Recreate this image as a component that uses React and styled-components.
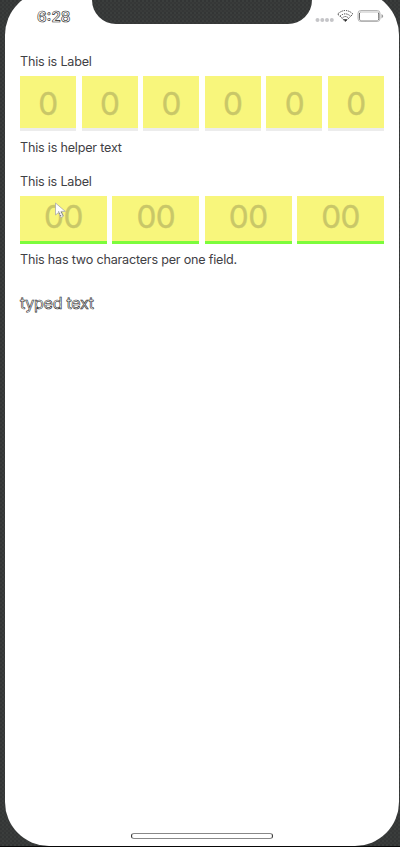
import React from "react";
import styled, { createGlobalStyle } from "styled-components";

const GlobalStyle = createGlobalStyle`
  * { box-sizing: border-box; }
  body { margin: 0; background: #353737; overflow: hidden; }
`;

const Device = styled.div`
  position: relative;
  height: 847px;
  padding: 0 1px 1px 5px;
  overflow: hidden;
  border-bottom: 1px solid #080808;
  background: conic-gradient(#3b3e3d 25%, #353737 0 50%, #393b3a 0 75%, #333535 0) 0 0 / 4px 4px;
  font-family: Inter, "Liberation Sans", sans-serif;
`;

const Screen = styled.main`
  height: 855px;
  margin-top: -9px;
  padding: 9px 15px 0;
  border-radius: 44px;
  background: #fff;
`;

const Notch = styled.div`
  position: absolute;
  top: 0;
  left: 92px;
  width: 220px;
  height: 24px;
  border-radius: 0 0 24px 24px;
  background: conic-gradient(#3b3e3d 25%, #353737 0 50%, #393b3a 0 75%, #333535 0) 0 0 / 4px 4px;
`;

const StatusBar = styled.header`
  display: flex;
  justify-content: space-between;
  align-items: center;
  height: 33px;
  padding-left: 17px;
`;

const Time = styled.time`
  font-size: 15px;
  font-weight: 600;
  line-height: 18px;
  color: #fff;
  -webkit-text-stroke: 0.6px #222;
`;

const StatusIcons = styled.svg`
  width: 70px;
  height: 18px;
  margin-right: -1px;
`;

const Field = styled.section`
  display: flex;
  flex-direction: column;
  padding-top: ${({ $top }) => $top}px;
`;

const Label = styled.label`
  height: 16px;
  font-size: 12.6px;
  line-height: 18px;
  letter-spacing: -0.21px;
  color: #3f4145;
`;

const Cells = styled.div`
  display: grid;
  grid-template-columns: repeat(${({ $count }) => $count}, 1fr);
  gap: 5.6px;
  margin-top: 7px;
`;

const Cell = styled.div`
  height: ${({ $height }) => $height}px;
  border-bottom: 3px solid ${({ $line }) => $line};
  background: #f8f67c;
  color: #c9c768;
  font-size: 31.5px;
  line-height: ${({ $leading }) => $leading}px;
  letter-spacing: -0.5px;
  text-align: center;
  -webkit-text-stroke: 0.35px #c9c768;
`;

const Helper = styled.p`
  height: 16px;
  margin: ${({ $gap }) => $gap}px 0 0;
  color: #3f4145;
  font-size: 12.6px;
  line-height: 16px;
  letter-spacing: -0.2px;
`;

const TypedText = styled.p`
  margin: 25px 0 0;
  font-size: 16px;
  line-height: 20px;
  letter-spacing: -0.25px;
  color: #fff;
  -webkit-text-stroke: 0.6px #222;
`;

const Pointer = styled.svg`
  position: absolute;
  left: 54px;
  top: 202px;
  width: 12px;
  height: 18px;
`;

const HomeIndicator = styled.div`
  position: absolute;
  left: 131px;
  top: 833px;
  width: 142px;
  height: 6px;
  border: 1px solid #888;
  border-left-color: #333;
  border-right-color: #333;
  border-radius: 3px;
`;

function CodeField({ label, helper, count, placeholder, height, leading, line, top, gap }) {
  return (
    <Field $top={top}>
      <Label>{label}</Label>
      <Cells $count={count}>
        {Array.from({ length: count }, (_, i) => (
          <Cell key={i} $height={height} $leading={leading} $line={line}>{placeholder}</Cell>
        ))}
      </Cells>
      <Helper $gap={gap}>{helper}</Helper>
    </Field>
  );
}

export default function App() {
  return (
    <Device>
      <GlobalStyle />
      <Screen>
        <StatusBar>
          <Time>6:28</Time>
          <StatusIcons viewBox="0 0 70 18" fill="none">
            <g fill="#c5c5c8">
              <circle cx="2.5" cy="12" r="2" />
              <circle cx="7.3" cy="12" r="2" />
              <circle cx="12" cy="12" r="2" />
              <circle cx="16.8" cy="12" r="2" />
            </g>
            <g stroke="#222" strokeWidth=".9" strokeDasharray="1.3 1">
              <path d="M22.7 6Q30.3 -1 38 6L30.3 13.5Z" />
              <path d="M25 8.2Q30.3 3.5 35.6 8.2M27.5 10Q30.3 7 33.3 10" />
            </g>
            <path d="m28.4 11.3 2 2.3 2-2.3" fill="#222" />
            <rect x="43" y="2.5" width="22" height="11" rx="2.8" stroke="#b5b5b5" />
            <path d="M45 4h18M45 12.5h18" stroke="#999" strokeWidth=".6" />
            <path d="M45.2 4.5q-.8.3-.8 1.5v4.5q0 1.2.8 1.5M63 4.5q.8.3.8 1.5v4.5q0 1.2-.8 1.5" stroke="#333" strokeWidth=".8" />
            <path d="M66.5 6q3.4 2.2 0 4.4z" fill="#999" />
          </StatusIcons>
        </StatusBar>
        <CodeField
          label="This is Label" helper="This is helper text"
          count={6} placeholder="0" height={55} leading={56}
          line="#ececec" top={20} gap={9}
        />
        <CodeField
          label="This is Label" helper="This has two characters per one field."
          count={4} placeholder="00" height={48} leading={41}
          line="#7cfc3c" top={17} gap={8}
        />
        <TypedText>typed text</TypedText>
      </Screen>
      <Notch />
      <Pointer viewBox="0 0 12 18">
        <path d="M1.5 1v12l3-2.5 2.3 5 2.7-1.3-2.2-4.8h4z" fill="#fff" stroke="#aaa" strokeWidth=".8" />
        <path d="m4.7 9.5 2.6 5.2M7 9.8l2 4" stroke="#333" strokeWidth=".8" strokeDasharray="1 1" />
      </Pointer>
      <HomeIndicator />
    </Device>
  );
}
